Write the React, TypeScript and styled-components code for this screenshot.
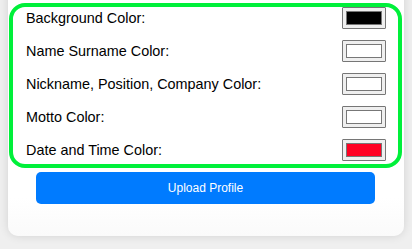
import React, { useState } from "react";
import styled, { createGlobalStyle } from "styled-components";

const GlobalStyle = createGlobalStyle`
  html, body {
    margin: 0;
    padding: 0;
    background: #efefef;
    overflow: hidden;
  }
  body {
    font-family: "Liberation Sans", Arial, Helvetica, sans-serif;
  }
`;

const Page = styled.div`
  padding: 0 8px 13px;
`;

const Card = styled.div`
  width: 396px;
  margin-top: -20px;
  padding: 23px 2px 32px 1px;
  box-sizing: border-box;
  background: linear-gradient(180deg, #fff 85%, #fafafa 100%);
  border-radius: 10px;
  box-shadow: 0 0 10px rgba(0, 0, 0, 0.12);
  display: flex;
  flex-direction: column;
  align-items: center;
`;

const ColorSection = styled.div`
  align-self: stretch;
  border: 4px solid #00f03a;
  border-radius: 16px;
  padding: 0 12px 3px 13px;
  display: flex;
  flex-direction: column;
  gap: 11px;
`;

const Row = styled.label`
  height: 22px;
  display: flex;
  align-items: center;
  justify-content: space-between;
  font-size: 14.4px;
  color: #000;
`;

const ColorInput = styled.input`
  -webkit-appearance: none;
  appearance: none;
  width: 44px;
  height: 22px;
  margin: 0;
  padding: 0;
  box-sizing: border-box;
  border: 1px solid #767676;
  border-radius: 1px;
  background: #efefef;
  cursor: pointer;
  &::-webkit-color-swatch-wrapper {
    padding: 3px;
  }
  &::-webkit-color-swatch {
    border: 1px solid #777;
    border-radius: 0;
  }
`;

const UploadButton = styled.button`
  width: 339px;
  height: 32px;
  margin-top: 4px;
  border: none;
  border-radius: 5px;
  background: #007bff;
  color: #fff;
  font-family: "Liberation Sans", Arial, Helvetica, sans-serif;
  font-size: 12px;
  cursor: pointer;
`;

const fields = [
  { key: "background", label: "Background Color:", value: "#000000" },
  { key: "name", label: "Name Surname Color:", value: "#ffffff" },
  { key: "nickname", label: "Nickname, Position, Company Color:", value: "#ffffff" },
  { key: "motto", label: "Motto Color:", value: "#ffffff" },
  { key: "date", label: "Date and Time Color:", value: "#ff0022" },
];

const App = () => {
  const [colors, setColors] = useState<Record<string, string>>(
    Object.fromEntries(fields.map((f) => [f.key, f.value]))
  );

  return (
    <>
      <GlobalStyle />
      <Page>
        <Card>
          <ColorSection>
            {fields.map((f) => (
              <Row key={f.key}>
                <span>{f.label}</span>
                <ColorInput
                  type="color"
                  value={colors[f.key]}
                  onChange={(e) =>
                    setColors({ ...colors, [f.key]: e.target.value })
                  }
                />
              </Row>
            ))}
          </ColorSection>
          <UploadButton>Upload Profile</UploadButton>
        </Card>
      </Page>
    </>
  );
};

export default App;
